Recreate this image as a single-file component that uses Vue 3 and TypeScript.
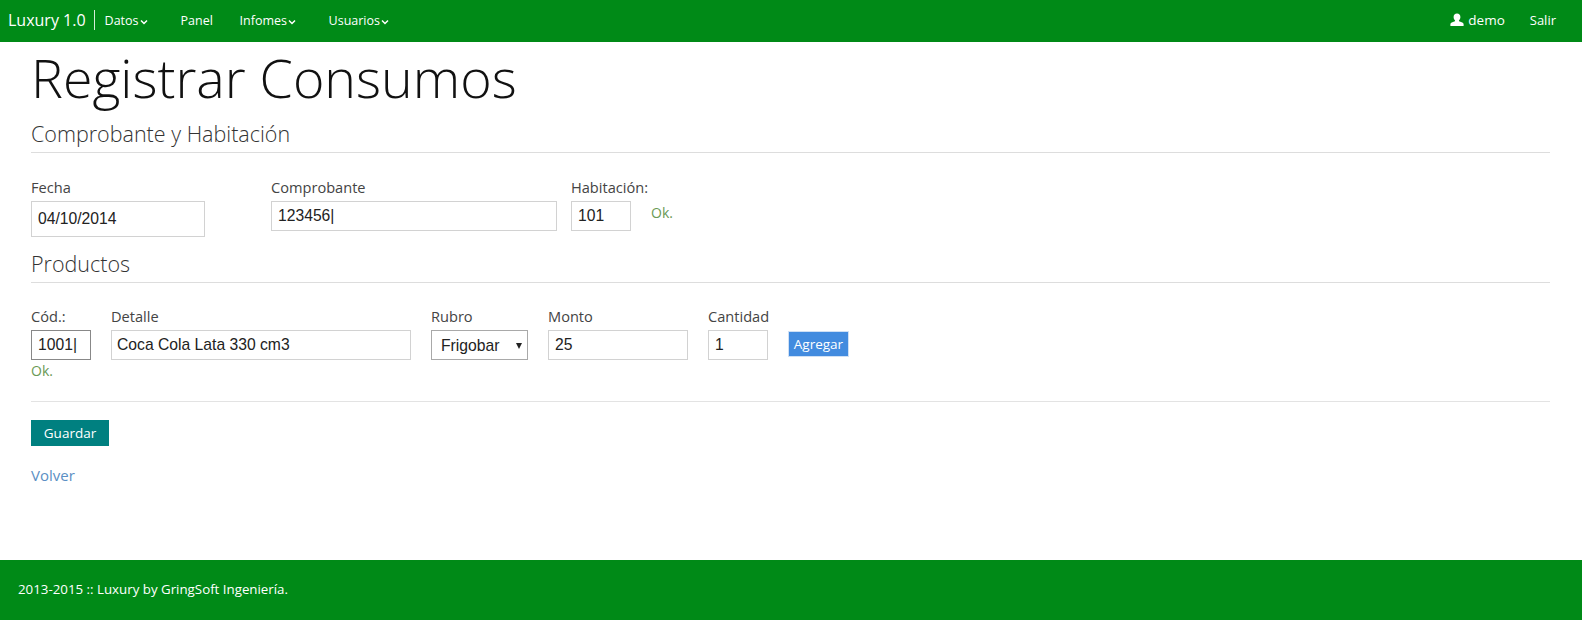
<script setup lang="ts">
const menu = [
  { label: 'Datos', caret: true, cls: 'm-datos' },
  { label: 'Panel', caret: false, cls: 'm-panel' },
  { label: 'Infomes', caret: true, cls: 'm-infomes' },
  { label: 'Usuarios', caret: true, cls: 'm-usuarios' },
]
</script>

<template>
  <div class="page">
    <header class="navbar">
      <span class="brand">Luxury 1.0</span>
      <nav class="menu">
        <a v-for="m in menu" :key="m.label" class="menu-item" :class="m.cls">
          {{ m.label }}
          <svg v-if="m.caret" class="caret" width="8" height="6" viewBox="0 0 8 6"><path d="M1 1.5 L4 4.5 L7 1.5" fill="none" stroke="#fff" stroke-width="1.5" /></svg>
        </a>
      </nav>
      <div class="nav-right">
        <span class="user">
          <svg width="14" height="14" viewBox="0 0 14 14"><path d="M7 0.5c2.1 0 3.4 1.5 3.4 3.5 0 1.4-.6 2.7-1.5 3.4 0 .6.2 1 .8 1.2 1.8.6 3.6 1.2 3.9 2.4v2H.4v-2c.3-1.2 2.1-1.8 3.9-2.4.6-.2.8-.6.8-1.2C4.200 6.700 3.600 5.400 3.600 4c0-2 1.300-3.500 3.400-3.500z" fill="#fff" /></svg>
          demo
        </span>
        <a class="salir">Salir</a>
      </div>
    </header>

    <main class="content">
      <h1>Registrar Consumos</h1>

      <h2 class="legend first">Comprobante y Habitación</h2>
      <div class="row row-top">
        <div class="field">
          <label>Fecha</label>
          <input class="w-fecha tall" value="04/10/2014" readonly />
        </div>
        <div class="field gap-comp">
          <label>Comprobante</label>
          <input class="w-comp" value="123456|" readonly />
        </div>
        <div class="field narrow">
          <label>Habitación:</label>
          <input class="w-small" value="101" readonly />
        </div>
        <span class="ok ok-hab">Ok.</span>
      </div>

      <h2 class="legend second">Productos</h2>
      <div class="row row-prod">
        <div class="field">
          <label>Cód.:</label>
          <input class="w-small focus" value="1001|" readonly />
          <span class="ok ok-cod">Ok.</span>
        </div>
        <div class="field">
          <label>Detalle</label>
          <input class="w-det" value="Coca Cola Lata 330 cm3" readonly />
        </div>
        <div class="field">
          <label>Rubro</label>
          <span class="select-wrap">
            <select class="w-rubro">
              <option>Frigobar</option>
            </select>
          </span>
        </div>
        <div class="field">
          <label>Monto</label>
          <input class="w-monto" value="25" readonly />
        </div>
        <div class="field narrow">
          <label>Cantidad</label>
          <input class="w-small" value="1" readonly />
        </div>
        <button class="btn-add">Agregar</button>
      </div>

      <button class="btn-save">Guardar</button>
      <a class="back">Volver</a>
    </main>

    <footer class="footer">2013-2015 :: Luxury by GringSoft Ingeniería.</footer>
  </div>
</template>

<style>
html, body { margin: 0; padding: 0; background: #fff; }
</style>

<style scoped>
.page {
  width: 1582px;
  height: 620px;
  display: flex;
  flex-direction: column;
  font-family: "Open Sans", sans-serif;
  color: #444;
  overflow: hidden;
}
.navbar {
  height: 42px;
  flex: none;
  background: #008a17;
  color: #fff;
  display: flex;
  align-items: center;
  padding: 0 26px 2px 8px;
  box-sizing: border-box;
}
.brand {
  font-size: 16px;
  padding-right: 8px;
  line-height: 20px;
  border-right: 1px solid #d5ecd9;
}
.menu { display: flex; align-items: center; margin-left: 10px; }
.menu-item { font-size: 12.5px; font-weight: 500; white-space: nowrap; display: inline-flex; align-items: center; }
.caret { margin-left: 1px; margin-top: 3px; }
.m-datos { width: 76px; }
.m-panel { width: 59px; }
.m-infomes { width: 89px; }
.nav-right { margin-left: auto; display: flex; align-items: center; font-size: 13px; font-weight: 500; }
.user { display: inline-flex; align-items: center; gap: 4px; font-size: 13.5px; }
.salir { margin-left: 25px; }

.content { flex: 1; padding: 0 32px 0 31px; position: relative; }
h1 {
  font-size: 53.7px;
  font-weight: 300;
  line-height: 72px;
  color: #111;
  margin: 0;
}
.legend {
  font-size: 21.5px;
  font-weight: 300;
  color: #333;
  margin: 0;
  line-height: 28px;
  border-bottom: 1px solid #ddd;
}
.first { padding-bottom: 4px; margin-top: 6px; }
.second { padding-bottom: 4px; margin-top: 12px; }
.row { display: flex; align-items: flex-start; }
.row-top { margin-top: 24px; height: 61px; }
.row-prod { margin-top: 23px; gap: 20px; height: 95px; border-bottom: 1px solid #e3e3e3; }
.field { display: flex; flex-direction: column; align-items: flex-start; }
.narrow { width: 60px; }
.field label { font-size: 14.6px; line-height: 20px; margin-bottom: 4px; color: #444; white-space: nowrap; }
.row-top .field:nth-child(1) { margin-right: 66px; }
.row-top .gap-comp { margin-right: 14px; }
input, select {
  box-sizing: border-box;
  height: 30px;
  border: 1px solid #d2d2d2;
  padding: 0 6px;
  font-family: "Liberation Sans", Arial, sans-serif;
  font-size: 15.7px;
  color: #222;
  background: #fff;
  outline: none;
  margin: 0;
  border-radius: 0;
}
.tall { height: 36px; }
.w-fecha { width: 174px; }
.w-comp { width: 286px; }
.w-small { width: 60px; }
.w-det { width: 300px; padding-left: 5px; }
.select-wrap { position: relative; display: block; }
.select-wrap::after {
  content: "";
  position: absolute;
  right: 6px;
  top: 13px;
  border-left: 3.5px solid transparent;
  border-right: 3.5px solid transparent;
  border-top: 6px solid #222;
}
.w-rubro { display: block; width: 97px; border-color: #a9a9a9; padding: 0 0 0 9px; appearance: none; }
.w-monto { width: 140px; }
.focus { border-color: #888; }
.ok { color: #6a9a55; font-size: 14px; line-height: 20px; }
.ok-hab { margin: 26px 0 0 20px; }
.ok-cod { margin-top: 1px; }
.btn-add {
  margin-top: 25px;
  width: 61px;
  height: 26px;
  padding: 0;
  border: 1px solid #cfe0f5;
  background: #428bdf;
  color: #fff;
  font-family: "Open Sans", sans-serif;
  font-size: 13.5px;
}
.btn-save {
  display: block;
  margin-top: 18px;
  width: 78px;
  height: 26px;
  padding: 0;
  border: 0;
  background: #008080;
  color: #fff;
  font-family: "Open Sans", sans-serif;
  font-size: 13.5px;
}
.back { display: block; margin-top: 19px; font-size: 15px; line-height: 20px; color: #5b8fc4; }
.footer {
  height: 60px;
  flex: none;
  background: #008a17;
  color: #fff;
  display: flex;
  align-items: center;
  padding: 0 0 2px 18px;
  box-sizing: border-box;
  font-size: 13.3px;
  font-weight: 400;
}
</style>
